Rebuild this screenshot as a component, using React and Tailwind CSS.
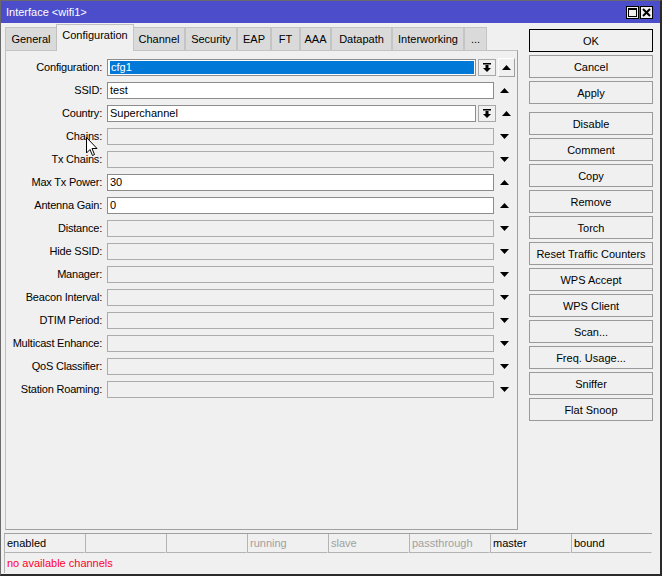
import React from 'react';

const tabs = [
  { name: 'General', w: 'w-[52px]' },
  { name: 'Configuration', w: 'w-[78px]', active: true },
  { name: 'Channel', w: 'w-[52px]' },
  { name: 'Security', w: 'w-[52px]' },
  { name: 'EAP', w: 'w-[34px]' },
  { name: 'FT', w: 'w-[29px]' },
  { name: 'AAA', w: 'w-[31px]' },
  { name: 'Datapath', w: 'w-[61px]' },
  { name: 'Interworking', w: 'w-[72px]' },
  { name: '...', w: 'w-[23px]' },
];

const fields = [
  { label: 'Configuration', value: 'cfg1', select: true, selected: true, up: true, boxed: true },
  { label: 'SSID', value: 'test', up: true },
  { label: 'Country', value: 'Superchannel', select: true, up: true },
  { label: 'Chains', disabled: true },
  { label: 'Tx Chains', disabled: true },
  { label: 'Max Tx Power', value: '30', up: true },
  { label: 'Antenna Gain', value: '0', up: true },
  { label: 'Distance', disabled: true },
  { label: 'Hide SSID', disabled: true },
  { label: 'Manager', disabled: true },
  { label: 'Beacon Interval', disabled: true },
  { label: 'DTIM Period', disabled: true },
  { label: 'Multicast Enhance', disabled: true },
  { label: 'QoS Classifier', disabled: true },
  { label: 'Station Roaming', disabled: true },
];

const buttons = [
  ['OK', 'Cancel', 'Apply'],
  ['Disable', 'Comment', 'Copy', 'Remove', 'Torch', 'Reset Traffic Counters', 'WPS Accept', 'WPS Client', 'Scan...', 'Freq. Usage...', 'Sniffer', 'Flat Snoop'],
];

const status = [
  { t: 'enabled' },
  { t: '' },
  { t: '' },
  { t: 'running', dim: true },
  { t: 'slave', dim: true },
  { t: 'passthrough', dim: true },
  { t: 'master' },
  { t: 'bound' },
];

function Triangle({ up }) {
  return (
    <svg width="9" height="5" viewBox="0 0 9 5">
      {up ? <polygon points="0,5 9,5 4.5,0" fill="#000" /> : <polygon points="0,0 9,0 4.5,5" fill="#000" />}
    </svg>
  );
}

function DropIcon() {
  return (
    <svg width="8" height="9" viewBox="0 0 8 9">
      <rect x="0" y="0" width="8" height="1.5" fill="#000" />
      <rect x="2.5" y="2" width="3" height="3" fill="#000" />
      <polygon points="0,5 8,5 4,9" fill="#000" />
    </svg>
  );
}

function Field({ f }) {
  return (
    <div className="flex items-center h-[17px]">
      <div className="w-[95px] text-right leading-none whitespace-nowrap tracking-[-0.2px]">{f.label}:</div>
      <div className="ml-[5px] flex items-center">
        <div
          className={
            'h-[17px] border flex items-center pl-[2px] leading-none ' +
            (f.select ? 'w-[369px] ' : 'w-[387px] ') +
            (f.disabled ? 'bg-[#f0f0f0] border-[#acacac]' : 'bg-white border-[#8c8c8c]')
          }
        >
          {f.selected ? (
            <div className="h-[13px] flex-1 bg-[#0078d7] text-white flex items-center pl-[1px] mr-[1px]">{f.value}</div>
          ) : (
            <span>{f.value}</span>
          )}
        </div>
        {f.select && (
          <div className="ml-[2px] w-[18px] h-[17px] border border-[#a8a8a8] bg-[#f0f0f0] flex items-center justify-center">
            <DropIcon />
          </div>
        )}
      </div>
      <div
        className={
          'ml-[2px] w-[17px] h-[19px] flex items-center justify-center ' +
          (f.boxed ? 'border border-t-white border-l-white border-b-[#a0a0a0] border-r-[#a0a0a0]' : '')
        }
      >
        <Triangle up={f.up} />
      </div>
    </div>
  );
}

export default function App() {
  return (
    <div className="w-[662px] h-[576px] bg-[#f0f0f0] font-['Liberation_Sans',Arial,sans-serif] text-[11px] text-black border-l border-t border-[#6a6a6a] border-r-2 border-b-2 border-r-[#2a2a2a] border-b-[#2a2a2a] flex flex-col overflow-hidden relative">
      {/* Title bar */}
      <div className="h-[22px] shrink-0 bg-[#4b4dca] flex items-center justify-between pl-[5px] pr-[7px] pt-[1px]">
        <span className="text-white text-[11px] leading-none">Interface &lt;wifi1&gt;</span>
        <div className="flex gap-[1px]">
          <div className="w-[13px] h-[13px] bg-[#f0f0f0] border border-black flex items-center justify-center">
            <div className="w-[9px] h-[9px] border border-black border-t-2" />
          </div>
          <div className="w-[13px] h-[13px] bg-[#f0f0f0] border border-black flex items-center justify-center">
            <svg width="9" height="9" viewBox="0 0 9 9">
              <path d="M1 1 L8 8 M8 1 L1 8" stroke="#000" strokeWidth="2" />
            </svg>
          </div>
        </div>
      </div>

      <div className="flex flex-1">
        {/* Left: tabs + panel */}
        <div className="w-[517px] pl-[4px] pt-[1px] flex flex-col">
          <div className="flex items-end h-[27px] relative z-10 -mb-px">
            {tabs.map((t) =>
              t.active ? (
                <div
                  key={t.name}
                  className={t.w + ' h-[27px] bg-[#f0f0f0] border border-b-0 border-[#c0c0c0] flex items-start justify-center pt-[5px] leading-none -mx-[1px]'}
                >
                  {t.name}
                </div>
              ) : (
                <div
                  key={t.name}
                  className={t.w + ' h-[24px] bg-[#dadada] border border-[#c4c4c4] flex items-center justify-center leading-none'}
                >
                  {t.name}
                </div>
              )
            )}
          </div>
          <div className="h-[480px] border border-[#c0c0c0] border-r-[#a0a0a0] border-b-[#a0a0a0] pt-[8px] pl-[1px] flex flex-col gap-[6px]">
            {fields.map((f) => (
              <Field key={f.label} f={f} />
            ))}
          </div>
        </div>

        {/* Right: buttons */}
        <div className="ml-[11px] pt-[6px] w-[124px] flex flex-col">
          {buttons.map((group, gi) => (
            <div key={gi} className={'flex flex-col gap-[3px] ' + (gi ? 'mt-[8px]' : '')}>
              {group.map((b) => (
                <div
                  key={b}
                  className={
                    'h-[23px] flex items-center justify-center leading-none bg-[#f0f0f0] border pt-[1px] ' +
                    (b === 'OK' ? 'border-black' : 'border-[#9a9a9a]')
                  }
                >
                  {b}
                </div>
              ))}
            </div>
          ))}
        </div>
      </div>

      {/* Status bar */}
      <div className="h-[41px] shrink-0 ml-[3px] mr-[8px] flex flex-col">
        <div className="h-[20px] flex border-t border-[#a0a0a0]">
          {status.map((s, i) => (
            <div
              key={i}
              className={
                'flex-1 border-l border-r border-b border-[#b4b4b4] border-r-[#f0f0f0] flex items-center pl-[2px] pt-[1px] leading-none ' +
                (s.dim ? 'text-[#a0a0a0]' : '')
              }
            >
              {s.t}
            </div>
          ))}
        </div>
        <div className="h-[20px] flex items-center pl-[2px] border-l border-[#b4b4b4] text-[#ff0030] leading-none">
          no available channels
        </div>
      </div>

      {/* Mouse pointer */}
      <svg className="absolute left-[85px] top-[136px]" width="13" height="20" viewBox="0 0 13 20">
        <path d="M0.5 0.5 L0.5 16 L4 12.5 L6.5 18.5 L8.5 17.5 L6 11.5 L11 11.5 Z" fill="#fff" stroke="#000" strokeWidth="1" />
      </svg>
    </div>
  );
}
